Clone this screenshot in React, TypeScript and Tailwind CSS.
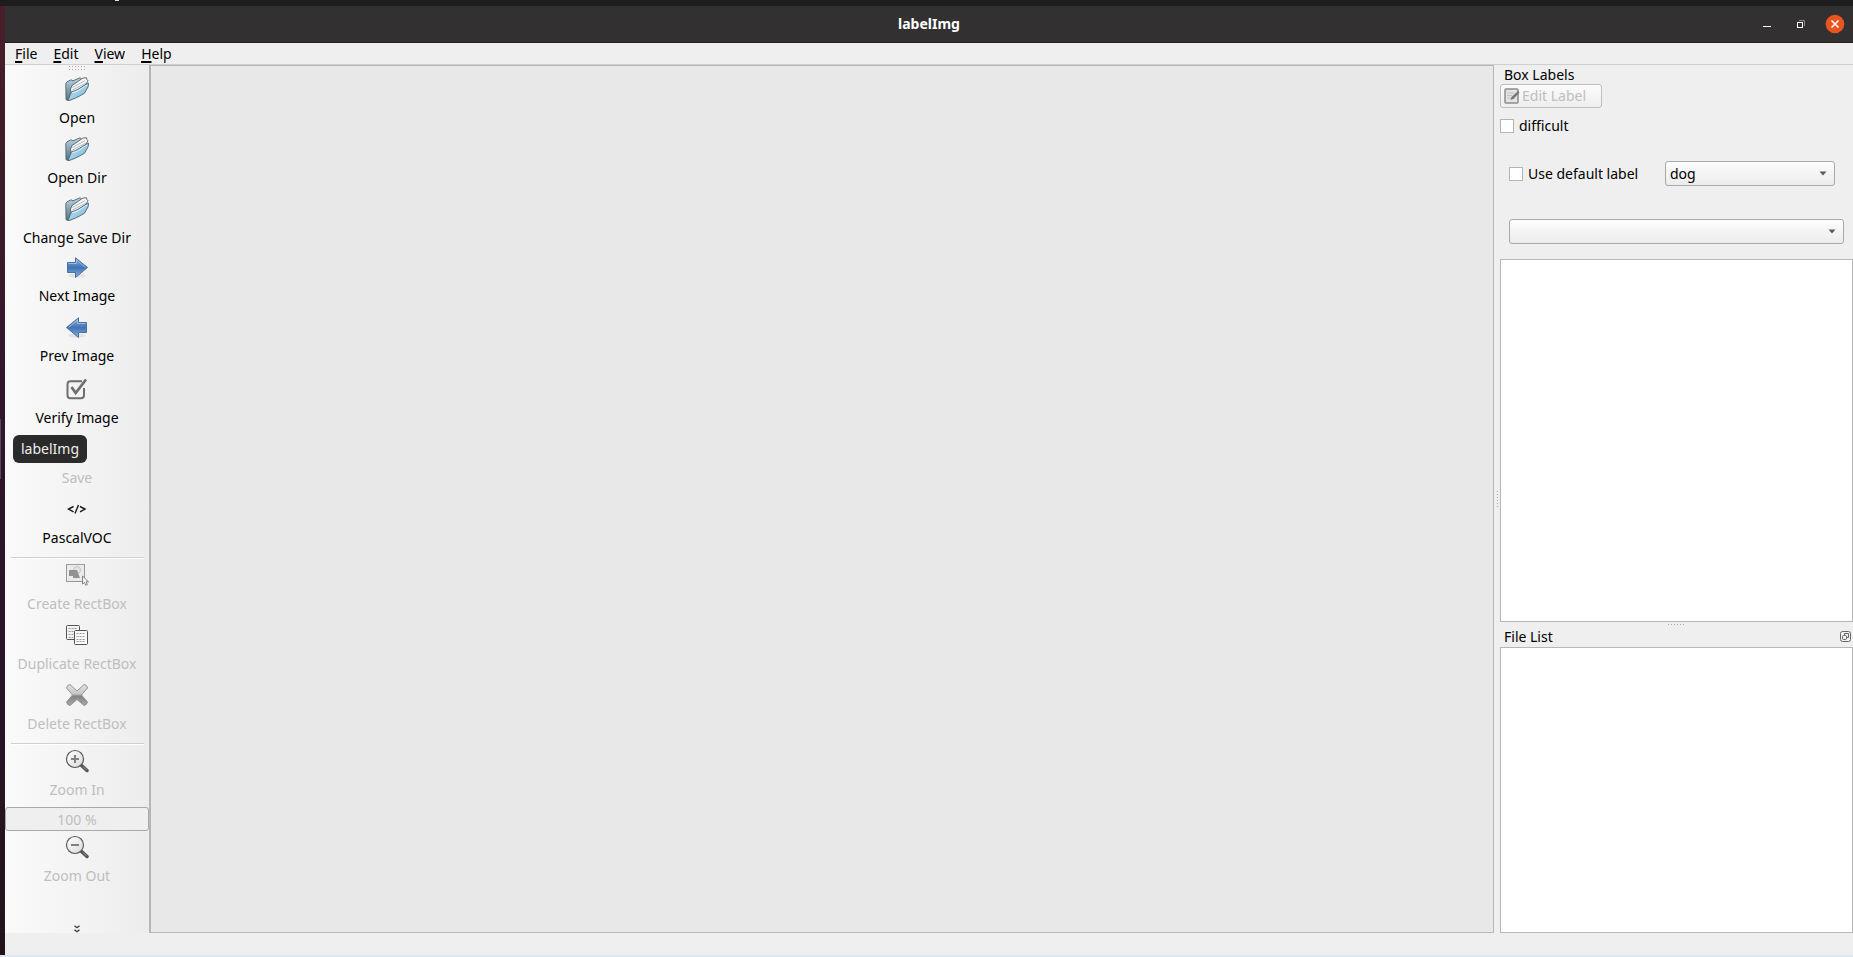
import type { ReactNode } from "react";
import clsx from "clsx";

type Tool = {
  label: string;
  icon: ReactNode;
  size?: "short" | "tall";
  disabled?: boolean;
};

const FolderIcon = () => (
  <svg width="24" height="24" viewBox="0 0 24 24">
    <defs>
      <linearGradient id="folderFront" x1="0" y1="0" x2="1" y2="1">
        <stop offset="0" stopColor="#d3e9f4" />
        <stop offset="1" stopColor="#6fb2d6" />
      </linearGradient>
      <linearGradient id="folderBack" x1="0" y1="0" x2="0" y2="1">
        <stop offset="0" stopColor="#b9d6e4" />
        <stop offset="1" stopColor="#4f6f80" />
      </linearGradient>
    </defs>
    <path
      d="M.8 6.5 2 4.8l4-2 2 1 7-3 1.500 1.200L17 8 3 23.400 1 22.600z"
      fill="url(#folderBack)"
      stroke="#55656d"
      strokeWidth=".9"
    />
    <path d="M5.500 12 7 8.500 18 1l3.500-.2.5 2 1 1-3 5L6 17z" fill="#f6f7f8" stroke="#555c60" strokeWidth=".9" />
    <path d="M7.500 10.500 20 3.600M7.500 13 21 6" stroke="#a0a8ac" strokeWidth=".8" />
    <path
      d="m3 23.200 3.600-8.600C12 14 17 8.800 23.600 6.200l-.5 3.600-3.600 6.400C15 19 9 22 4 23.600z"
      fill="url(#folderFront)"
      stroke="#4c626f"
      strokeWidth=".9"
    />
    <path d="M7.500 15.600C13 15 17.500 10.500 22.500 7.800" fill="none" stroke="#e6f4fb" strokeWidth=".8" />
  </svg>
);

const ArrowIcon = ({ flip }: { flip?: boolean }) => (
  <svg width="24" height="24" viewBox="0 0 24 24" className={clsx({ "-scale-x-100": flip })}>
    <defs>
      <linearGradient id="arrowFill" x1="0" y1="0" x2="0" y2="1">
        <stop offset="0" stopColor="#8fb0da" />
        <stop offset=".5" stopColor="#3f73b3" />
        <stop offset="1" stopColor="#8bb2e2" />
      </linearGradient>
    </defs>
    <ellipse cx="12" cy="20.500" rx="9" ry="2" fill="#e2e2e2" />
    <path d="M2.500 7.500h8V2.800L22.500 12.500l-12 10v-5h-8z" fill="url(#arrowFill)" stroke="#4a70a0" strokeWidth="1" />
    <path d="M3.500 8.500h8V5L20.500 12.500" fill="none" stroke="#a9c4e6" strokeWidth=".8" />
  </svg>
);

const VerifyIcon = () => (
  <svg width="24" height="24" viewBox="0 0 24 24" fill="none" stroke="#6e6e6e">
    <path d="M17 4.200H5.500a3 3 0 0 0-3 3v11a3 3 0 0 0 3 3H16a3 3 0 0 0 3-3V11" strokeWidth="2" />
    <path d="m6.500 10 4.200 6L21 2.500" strokeWidth="2.800" />
  </svg>
);

const DiskIcon = () => (
  <svg width="24" height="24" viewBox="0 0 24 24" fill="none" stroke="#9a9a9a">
    <path d="M2.500 2.500h19v19h-19zM6 2.500v8h12v-8M6 21.500v-7h12v7" />
  </svg>
);

const CodeIcon = () => (
  <svg width="24" height="24" viewBox="0 0 24 24" fill="none" stroke="#1a1a1a" strokeWidth="1.400">
    <path d="M8.500 9.500 3.500 12l5 2.800M15 9.500l5 2.500-5 2.800M13.500 8 10 16.500" />
  </svg>
);

const CreateIcon = () => (
  <svg width="24" height="24" viewBox="0 0 24 24">
    <rect x="2" y="2" width="18" height="17" fill="#ebebeb" />
    <rect x="1.500" y="1.500" width="18" height="17" fill="none" stroke="#444" strokeDasharray="1 1" />
    <circle cx="12" cy="7" r="3.500" fill="#e2e2e2" stroke="#c4c4c4" />
    <path d="M4 7h8l3 8H8v-2H4z" fill="#929292" />
    <path d="M17.500 13v8l2-1.500 1.300 2.800 1.600-.8-1.300-2.700h2.400z" fill="#f5f5f5" stroke="#777" strokeWidth=".9" />
  </svg>
);

const DuplicateIcon = () => (
  <svg width="24" height="24" viewBox="0 0 24 24">
    <rect x="1.500" y="2.500" width="13" height="14" rx="1" fill="#f3f3f3" stroke="#555" />
    <path d="M3.500 5.500h9M3.500 8.500h9M3.500 11.500h9M3.500 14.500h6" stroke="#999" strokeDasharray="2 1" />
    <rect x="9.500" y="7.500" width="13" height="14" rx="1" fill="#fafafa" stroke="#555" />
    <path d="M11.500 10.500h9M11.500 13.500h9M11.500 16.500h9M11.500 18.500h9" stroke="#999" strokeDasharray="2 1" />
  </svg>
);

const DeleteIcon = () => (
  <svg width="24" height="24" viewBox="0 0 24 24">
    <defs>
      <linearGradient id="deleteFill" x1="0" y1="0" x2="0" y2="1">
        <stop offset="0" stopColor="#e2e2e2" />
        <stop offset=".45" stopColor="#c6c6c6" />
        <stop offset=".55" stopColor="#838383" />
        <stop offset="1" stopColor="#a8a8a8" />
      </linearGradient>
    </defs>
    <path
      d="M5 1.500 12 8l7-6.500q3 0 3.500 3.500L16.500 12l6 7q-.5 3-3.500 3.500L12 16.500l-7 6Q2 22 1.500 19l6-7-6-7Q2 2 5 1.500z"
      fill="url(#deleteFill)"
      stroke="#949494"
      strokeLinejoin="round"
    />
  </svg>
);

const ZoomIcon = ({ plus }: { plus?: boolean }) => (
  <svg width="24" height="24" viewBox="0 0 24 24" fill="none">
    <defs>
      <linearGradient id="lensFill" x1="0" y1="0" x2="1" y2="1">
        <stop offset="0" stopColor="#ffffff" />
        <stop offset="1" stopColor="#dadada" />
      </linearGradient>
    </defs>
    <path d="m16.500 16.500 5.500 5" stroke="#555" strokeWidth="3.500" strokeLinecap="round" />
    <path d="m18 17.500 3.500 3.500" stroke="#999" strokeWidth="1" />
    <circle cx="10" cy="10" r="8.500" fill="url(#lensFill)" stroke="#5c5c5c" strokeWidth="1.200" />
    <path d={plus ? "M6 10h8M10 6v8" : "M6 10h8"} stroke="#808080" strokeWidth="2" />
  </svg>
);

const EditIcon = () => (
  <svg width="16" height="16" viewBox="0 0 16 16">
    <rect x="1" y="1" width="13" height="14" rx="1" fill="#e4e4e4" stroke="#8c8c8c" strokeWidth="1.500" />
    <path d="M3 5h7M3 7.500h5M3 10h4" stroke="#c2c2c2" />
    <path d="m6.500 12 1-3L14 3l1.500 1.500-6 6.500z" fill="#777" />
  </svg>
);

const fileTools: Tool[] = [
  { label: "Open", icon: <FolderIcon /> },
  { label: "Open Dir", icon: <FolderIcon /> },
  { label: "Change Save Dir", icon: <FolderIcon /> },
  { label: "Next Image", icon: <ArrowIcon />, size: "short" },
  { label: "Prev Image", icon: <ArrowIcon flip /> },
  { label: "Verify Image", icon: <VerifyIcon />, size: "tall" },
  { label: "Save", icon: <DiskIcon />, disabled: true },
  { label: "PascalVOC", icon: <CodeIcon /> },
];

const boxTools: Tool[] = [
  { label: "Create RectBox", icon: <CreateIcon />, size: "short", disabled: true },
  { label: "Duplicate RectBox", icon: <DuplicateIcon />, disabled: true },
  { label: "Delete RectBox", icon: <DeleteIcon />, disabled: true },
];

const ToolButton = ({ label, icon, size, disabled }: Tool) => (
  <button
    type="button"
    disabled={disabled}
    className={clsx("flex w-full shrink-0 flex-col items-center justify-end gap-[7px] pb-[3px] whitespace-nowrap", {
      "h-[58px]": size === "short",
      "h-[60px]": !size,
      "h-[62px]": size === "tall",
      "text-[#bebebe]": disabled,
    })}
  >
    {icon}
    <span className="leading-5">{label}</span>
  </button>
);

const Separator = () => <div className="mt-1.5 mr-[5px] ml-1.5 h-0.5 shrink-0 border-b border-white bg-[#d0d0d0]" />;

const Select = ({ id, label, options, className }: { id: string; label: string; options: string[]; className: string }) => (
  <div className={clsx("relative", className)}>
    <select
      id={id}
      aria-label={label}
      className="block h-[25px] w-full appearance-none rounded-[3px] border border-[#a9a9a9] bg-linear-to-b from-[#fdfdfd] to-[#ececec] pl-1 outline-none"
    >
      {options.map((option) => (
        <option key={option}>{option}</option>
      ))}
    </select>
    <svg width="8" height="5" viewBox="0 0 8 5" className="pointer-events-none absolute top-2.5 right-2">
      <path d="M.5.5h7L4 4.500z" fill="#5a5a5a" />
    </svg>
  </div>
);

const Checkbox = ({ id, label }: { id: string; label: string }) => (
  <div className="flex items-center gap-[5px]">
    <input id={id} type="checkbox" className="size-3.5 appearance-none border border-[#b4b4b4] bg-white checked:bg-[#308cc6]" />
    <label htmlFor={id} className="leading-5">
      {label}
    </label>
  </div>
);

const TitleBar = () => (
  <header className="grid h-[37px] shrink-0 grid-cols-[1fr_auto_1fr] items-center border-b border-[#231f20] bg-[#323031] text-white">
    <span />
    <h1 className="text-sm font-bold">labelImg</h1>
    <div className="flex items-center justify-end gap-3.5 pr-2">
      <button type="button" aria-label="Minimize" className="flex size-5 items-center justify-center">
        <svg width="8" height="8" viewBox="0 0 8 8">
          <path d="M0 6.500h8" stroke="#fff" />
        </svg>
      </button>
      <button type="button" aria-label="Restore" className="flex size-5 items-center justify-center">
        <svg width="10" height="10" viewBox="0 0 10 10" fill="none">
          <path d="M3 1.500h5.500V7" stroke="#8c8b8b" />
          <rect x="1.500" y="3.500" width="5" height="5" stroke="#fff" />
        </svg>
      </button>
      <button type="button" aria-label="Close" className="flex size-5 items-center justify-center">
        <svg width="20" height="20" viewBox="0 0 20 20">
          <circle cx="10" cy="10" r="9.300" fill="#e95420" />
          <path d="m6.500 6.500 7 7m0-7-7 7" stroke="#fff" strokeWidth="1.500" />
        </svg>
      </button>
    </div>
  </header>
);

const MenuBar = () => (
  <nav className="flex h-[22px] shrink-0 items-center gap-4 border-b border-[#cfcfcf] pl-2.5">
    {["File", "Edit", "View", "Help"].map((item) => (
      <button key={item} type="button" className="leading-5">
        <span className="underline decoration-2 underline-offset-2">{item[0]}</span>
        {item.slice(1)}
      </button>
    ))}
  </nav>
);

const Toolbar = () => (
  <aside className="relative flex w-36 shrink-0 flex-col bg-linear-to-r from-[#fafafa] to-[#ededed]">
    <svg width="18" height="6" viewBox="0 0 18 6" className="shrink-0 self-center">
      <path d="M1 1.500h17M1 4.500h17" stroke="#a9a9a9" strokeDasharray="1 2" />
    </svg>
    {fileTools.map((tool) => (
      <ToolButton key={tool.label} {...tool} />
    ))}
    <Separator />
    {boxTools.map((tool) => (
      <ToolButton key={tool.label} {...tool} />
    ))}
    <Separator />
    <ToolButton label="Zoom In" icon={<ZoomIcon plus />} size="short" disabled />
    <input
      aria-label="Zoom level"
      disabled
      defaultValue="100 %"
      className="mt-1 h-6 w-full shrink-0 rounded-[3px] border border-[#a9a9a9] bg-[#efefef] text-center text-[#bebebe]"
    />
    <ToolButton label="Zoom Out" icon={<ZoomIcon />} size="short" disabled />
    <button type="button" aria-label="More tools" className="mt-auto self-center">
      <svg width="8" height="8" viewBox="0 0 8 8" fill="none" stroke="#333" strokeWidth="1.200">
        <path d="m1.500.8 2.500 2 2.500-2M1.500 4.800l2.500 2 2.500-2" />
      </svg>
    </button>
    <div className="absolute top-[370px] left-2 rounded-md bg-[#2b2b2b] px-2 py-1 leading-5 text-[#eeeeee]">labelImg</div>
  </aside>
);

const Docks = () => (
  <aside className="flex w-[353px] shrink-0 flex-col">
    <h2 className="pl-1 leading-[19px]">Box Labels</h2>
    <button
      type="button"
      disabled
      className="flex h-6 w-[102px] items-center gap-0.5 rounded-[3px] border border-[#bdbdbd] bg-linear-to-b from-[#fcfcfc] to-[#eeeeee] pl-[3px] text-[#bebebe]"
    >
      <EditIcon />
      Edit Label
    </button>
    <div className="mt-2">
      <Checkbox id="difficult" label="difficult" />
    </div>
    <div className="mt-[25px] flex items-center pr-[18px] pl-[9px]">
      <Checkbox id="use-default" label="Use default label" />
      <Select id="default-label" label="Default label" options={["dog"]} className="ml-auto w-[170px]" />
    </div>
    <div className="mt-[33px] px-[9px]">
      <Select id="filter" label="Filter labels" options={[""]} className="w-full" />
    </div>
    <ul className="mt-[15px] flex-[14] border border-[#b6b6b6] bg-white" />
    <svg width="17" height="4" viewBox="0 0 17 4" className="shrink-0 self-center">
      <path d="M0 2.500h17" stroke="#a9a9a9" strokeDasharray="1 2" />
    </svg>
    <div className="flex h-[21px] shrink-0 items-center justify-between pr-0.5 pl-1">
      <h2 className="leading-5">File List</h2>
      <button type="button" aria-label="Float File List">
        <svg width="11" height="11" viewBox="0 0 11 11" fill="none" stroke="#666">
          <rect x=".5" y=".5" width="10" height="10" rx="2" />
          <rect x="2.500" y="4.500" width="4" height="4" rx="1" />
          <path d="M4.500 4.500v-2h4v4h-2" />
        </svg>
      </button>
    </div>
    <ul className="flex-[11] border border-[#b6b6b6] bg-white" />
  </aside>
);

const App = () => (
  <div className="flex h-screen flex-col overflow-hidden bg-[#1d1d1d] font-['Noto_Sans',sans-serif] text-sm text-black">
    <div className="h-1.5 shrink-0 pl-[115px]">
      <div className="h-px w-1 bg-[#dddddd]" />
    </div>
    <div className="flex min-h-0 flex-1">
      <div className="flex w-[5px] shrink-0 items-center bg-linear-to-b from-[#471f28] via-[#2e152c] to-[#22131b]">
        <div className="mb-16 h-[60px] w-px bg-[#5b4a5c]" />
      </div>
      <div className="flex min-w-0 flex-1 flex-col bg-[#efefef]">
        <TitleBar />
        <MenuBar />
        <div className="flex min-h-0 flex-1">
          <Toolbar />
          <main className="min-w-0 flex-1 border border-l-2 border-[#b6b6b6] bg-[#e8e8e8]" />
          <div className="flex w-1.5 shrink-0 items-center justify-center">
            <svg width="2" height="18" viewBox="0 0 2 18">
              <path d="M1.500 1v17" stroke="#a9a9a9" strokeDasharray="1 2" />
            </svg>
          </div>
          <Docks />
        </div>
        <footer className="h-[22px] shrink-0" />
      </div>
    </div>
    <div className="h-0.5 shrink-0 bg-[#dbe6f1]" />
  </div>
);

export default App;
